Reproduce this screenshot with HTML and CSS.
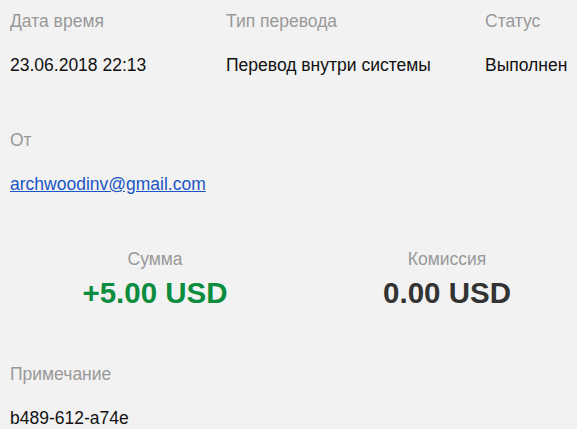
FILE: index.html
```html
<!DOCTYPE html>
<html lang="ru">
<head>
<meta charset="utf-8">
<link rel="stylesheet" href="styles.css">
</head>
<body>
<div class="page">
  <div class="row3">
    <div class="field">
      <div class="label">Дата время</div>
      <div class="value">23.06.2018 22:13</div>
    </div>
    <div class="field">
      <div class="label">Тип перевода</div>
      <div class="value">Перевод внутри системы</div>
    </div>
    <div class="field">
      <div class="label">Статус</div>
      <div class="value">Выполнен</div>
    </div>
  </div>
  <div class="field block">
    <div class="label">От</div>
    <div class="value"><a class="link" href="#">archwoodinv@gmail.com</a></div>
  </div>
  <div class="amounts">
    <div class="amount">
      <div class="label">Сумма</div>
      <div class="big plus">+5.00 USD</div>
    </div>
    <div class="amount">
      <div class="label">Комиссия</div>
      <div class="big">0.00 USD</div>
    </div>
  </div>
  <div class="field block note">
    <div class="label">Примечание</div>
    <div class="value">b489-612-a74e</div>
  </div>
</div>
</body>
</html>
```
FILE: styles.css
```css
html, body {
  margin: 0;
  padding: 0;
  background: #f2f2f2;
}
body {
  font-family: "Liberation Sans", Arial, sans-serif;
  font-size: 17.5px;
  line-height: 20px;
  color: #111;
  overflow: hidden;
}
.page {
  padding: 11px 10px 0 10px;
}
.row3 {
  display: grid;
  grid-template-columns: 216px 259px 1fr;
}
.label {
  color: #999;
}
.value {
  margin-top: 24px;
  white-space: nowrap;
}
.block {
  margin-top: 55px;
}
.link {
  color: #1a55c4;
  text-decoration: underline;
}
.amounts {
  display: grid;
  grid-template-columns: 290px 240px;
  column-gap: 27px;
  margin-top: 55px;
}
.amount {
  text-align: center;
}
.big {
  margin-top: 8px;
  font-size: 29.5px;
  line-height: 32px;
  font-weight: bold;
  color: #333;
  white-space: nowrap;
}
.big.plus {
  color: #0b8c3e;
}
.note {
  margin-top: 55px;
}
```
